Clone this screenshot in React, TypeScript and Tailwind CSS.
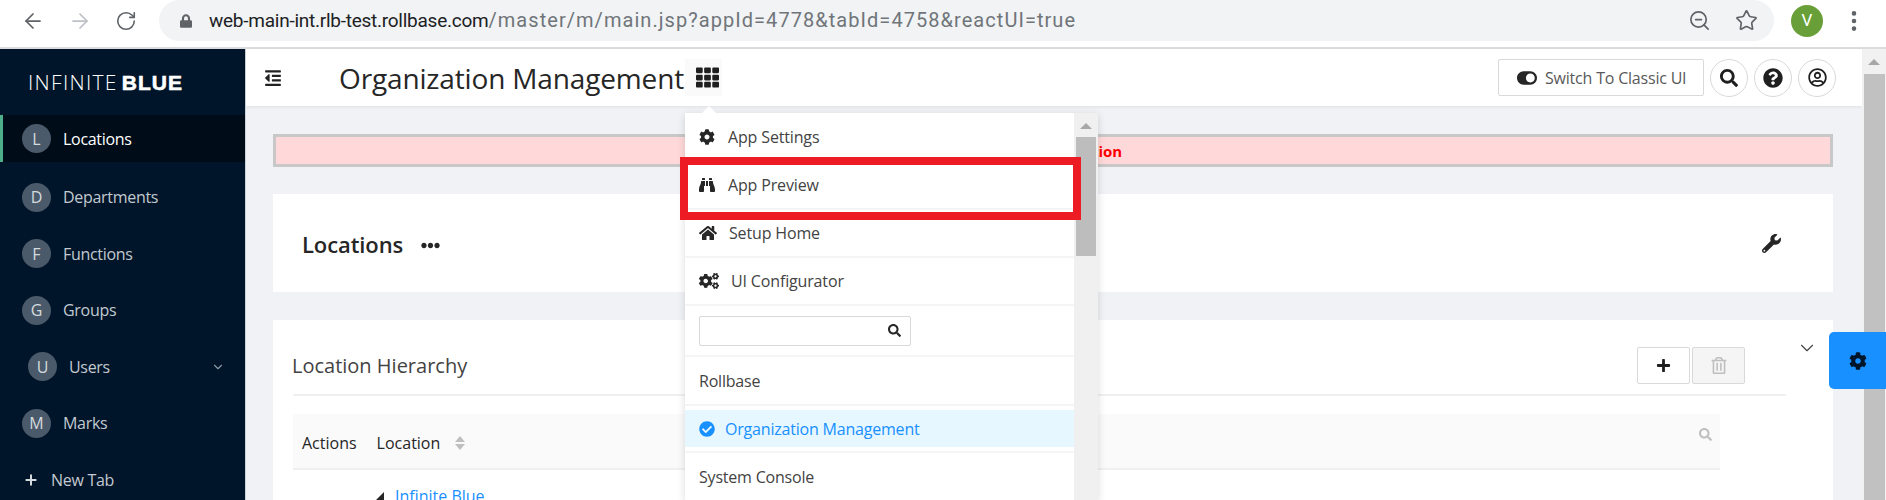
import React from 'react';
import { ArrowLeft, ArrowRight, RotateCw, ZoomOut, Star, EllipsisVertical, ChevronDown, Plus } from 'lucide-react';
import {
  FaBinoculars,
  FaCheckCircle,
  FaCog,
  FaCogs,
  FaEllipsisH,
  FaHome,
  FaLock,
  FaOutdent,
  FaPlus,
  FaQuestionCircle,
  FaRegTrashAlt,
  FaRegUserCircle,
  FaSearch,
  FaTh,
  FaToggleOn,
  FaWrench,
} from 'react-icons/fa';

const navItems = [
  { letter: 'L', label: 'Locations', active: true },
  { letter: 'D', label: 'Departments' },
  { letter: 'F', label: 'Functions' },
  { letter: 'G', label: 'Groups' },
  { letter: 'U', label: 'Users', nested: true },
  { letter: 'M', label: 'Marks' },
];

const BrowserBar: React.FC = () => (
  <div className="h-[49px] shrink-0 flex items-start bg-white border-b-2 border-[#dadce0]">
    <div className="w-[159px] h-[41px] shrink-0 relative flex items-center">
      <ArrowLeft className="ml-[21px] w-[24px] h-[24px] text-[#5f6368]" strokeWidth={1.75} />
      <ArrowRight className="ml-[23px] w-[24px] h-[24px] text-[#bdc1c6]" strokeWidth={1.75} />
      <RotateCw className="ml-[23px] w-[22px] h-[22px] text-[#5f6368]" strokeWidth={1.75} />
    </div>
    <div className="w-[1615px] h-[41px] bg-[#f1f3f4] rounded-r-[21px] rounded-l-[21px] flex items-center pl-[21px] pr-[16px]">
      <FaLock className="w-[12px] h-[14px] text-[#5f6368]" />
      <div className="ml-[17px] text-[19px] font-['Roboto',sans-serif] flex-1">
        <span className="text-[#202124] tracking-[-0.25px]">web-main-int.rlb-test.rollbase.com</span>
        <span className="text-[#70757a] text-[20px] tracking-[1.05px]">/master/m/main.jsp?appId=4778&amp;tabId=4758&amp;reactUI=true</span>
      </div>
      <ZoomOut className="w-[23px] h-[23px] text-[#5f6368]" strokeWidth={1.75} />
      <Star className="ml-[24px] w-[23px] h-[23px] text-[#5f6368]" strokeWidth={1.75} />
    </div>
    <div className="ml-[17px] mt-[5px] w-[32px] h-[32px] rounded-full bg-[#689f38] text-white text-[17px] flex items-center justify-center font-['Roboto',sans-serif]">
      V
    </div>
    <EllipsisVertical className="ml-[18px] mt-[8px] w-[26px] h-[26px] text-[#5f6368]" strokeWidth={2.25} />
  </div>
);

const Sidebar: React.FC = () => (
  <aside className="w-[246px] shrink-0 bg-[#001529] text-[#c3c9d0] border-r border-[#cfd3d8]">
    <div className="h-[66px] pl-[28px] flex items-center text-[21px] leading-none text-white">
      <span className="font-light tracking-[1.3px]">INFINITE</span>
      <span className="ml-[4px] font-black tracking-[1px] font-['Liberation_Sans',sans-serif] [-webkit-text-stroke:0.6px_white]">BLUE</span>
    </div>
    {navItems.map((item) => (
      <div
        key={item.letter}
        className={
          item.active
            ? 'h-[47px] mb-[7px] flex items-center text-[16px] text-white bg-[#000c17] border-l-[3px] border-[#4caf8a] pl-[19px]'
            : item.nested
              ? 'h-[56.5px] flex items-center text-[16px] pl-[28px]'
              : 'h-[56.5px] flex items-center text-[16px] pl-[22px]'
        }
      >
        <span className="w-[29px] h-[29px] rounded-full bg-[#4a5a6a] text-[#d5dade] flex items-center justify-center text-[16px] shrink-0">
          {item.letter}
        </span>
        <span className="ml-[12px] tracking-[-0.3px]">{item.label}</span>
        {item.nested && <ChevronDown className="ml-[101px] w-[14px] h-[14px] text-[#8c97a3]" />}
      </div>
    ))}
    <div className="h-[56px] pl-[23px] flex items-center text-[16px]">
      <Plus className="w-[16px] h-[16px] text-[#d5dade]" strokeWidth={3} />
      <span className="ml-[12px] tracking-[-0.3px]">New Tab</span>
    </div>
  </aside>
);

const Header: React.FC = () => (
  <div className="h-[57px] shrink-0 bg-white flex items-center shadow-[0_1px_3px_rgba(0,0,0,0.08)]">
    <FaOutdent className="ml-[18px] w-[18px] h-[18px] text-[#222]" />
    <h1 className="ml-[57px] text-[28px] leading-none text-[#262626] tracking-[-0.15px]">Organization Management</h1>
    <div className="ml-[1px] w-[37px] h-[37px] bg-[#fafafa] flex items-center justify-end pr-[3px]">
      <FaTh className="w-[23px] h-[23px] text-[#1f1f1f]" />
    </div>
    <button className="ml-auto w-[206px] h-[37px] bg-white border border-[#d9d9d9] rounded-[2px] flex items-center pl-[18px] text-[16px] text-[#595959]">
      <FaToggleOn className="w-[20px] h-[20px] text-[#262626]" />
      <span className="ml-[8px] tracking-[-0.2px]">Switch To Classic UI</span>
    </button>
    <button className="ml-[6px] w-[38px] h-[38px] rounded-full border border-[#d9d9d9] flex items-center justify-center">
      <FaSearch className="w-[18px] h-[18px] text-[#1f1f1f]" />
    </button>
    <button className="ml-[6px] w-[38px] h-[38px] rounded-full border border-[#d9d9d9] flex items-center justify-center">
      <FaQuestionCircle className="w-[20px] h-[20px] text-[#1f1f1f]" />
    </button>
    <button className="ml-[6px] mr-[26px] w-[38px] h-[38px] rounded-full border border-[#d9d9d9] flex items-center justify-center">
      <FaRegUserCircle className="w-[19px] h-[19px] text-[#1f1f1f]" />
    </button>
  </div>
);

const Content: React.FC = () => (
  <div className="flex-1 min-h-0 overflow-hidden pl-[27px] pr-[29px] pt-[28px]">
    <div className="h-[33px] pt-[1px] pr-[2px] bg-[#ffd9d9] border-[3px] border-[#c8c8c8] flex items-center justify-center text-[15px] font-bold text-[#ff0000]">
      Invalid Application
    </div>
    <div className="mt-[27px] h-[98px] bg-white flex items-center pl-[29px] pr-[52px]">
      <span className="pt-[3px] text-[22px] font-semibold text-[#262626] tracking-[-0.1px]">Locations</span>
      <FaEllipsisH className="ml-[18px] mt-[4px] w-[19px] h-[19px] text-[#262626]" />
      <FaWrench className="ml-auto w-[19px] h-[19px] text-[#262626]" />
    </div>
    <div className="mt-[28px] bg-white pl-[20px] h-[200px]">
      <div className="w-[1493px] h-[76px] border-b-2 border-[#f0f0f0] flex items-center pt-[16px] relative">
        <span className="pt-[2px] ml-[-1px] text-[20px] text-[#434343]">Location Hierarchy</span>
        <button className="ml-auto w-[53px] h-[37px] border border-[#d9d9d9] rounded-[2px] bg-white flex items-center justify-center">
          <FaPlus className="w-[15px] h-[15px] text-[#1f1f1f]" />
        </button>
        <button className="ml-[2px] mr-[41px] w-[53px] h-[37px] border border-[#d9d9d9] rounded-[2px] bg-[#f5f5f5] flex items-center justify-center">
          <FaRegTrashAlt className="w-[16px] h-[17px] text-[#bfbfbf]" />
        </button>
        <ChevronDown className="absolute right-[-32px] top-[17px] w-[22px] h-[22px] text-[#434343]" strokeWidth={1.25} />
      </div>
      <div className="mt-[18px] w-[1427px] h-[56px] bg-[#fafafa] border-b-2 border-[#f0f0f0] flex items-center pl-[9px] pr-[8px] text-[16px] text-[#262626]">
        <span className="pt-[4px]">Actions</span>
        <span className="pt-[4px] ml-[20px]">Location</span>
        <span className="mt-[4px] ml-[15px] flex flex-col gap-[2px]">
          <span className="block w-0 h-0 border-x-[5px] border-x-transparent border-b-[6px] border-b-[#bfbfbf]"></span>
          <span className="block w-0 h-0 border-x-[5px] border-x-transparent border-t-[6px] border-t-[#bfbfbf]"></span>
        </span>
        <FaSearch className="ml-auto mb-[14px] w-[13px] h-[13px] text-[#bfbfbf]" />
      </div>
      <div className="mt-[14px] pl-[83px] flex items-center text-[16px] text-[#1890ff]">
        <span className="w-0 h-0 border-l-[8px] border-l-transparent border-b-[8px] border-b-[#262626]"></span>
        <span className="ml-[11px]">Infinite Blue</span>
      </div>
    </div>
  </div>
);

const MenuRow: React.FC<{ icon: React.ReactNode; label: string; gap: string }> = ({ icon, label, gap }) => (
  <div className="h-[48px] border-b-2 border-[#f5f5f5] flex items-center pl-[14px] text-[16px] text-[#434343]">
    {icon}
    <span className={`${gap} tracking-[-0.15px]`}>{label}</span>
  </div>
);

const AppMenu: React.FC = () => (
  <div className="absolute left-[685px] top-[113px] w-[413px] h-[387px] flex bg-white shadow-[0_2px_8px_rgba(0,0,0,0.15)]">
    <span className="absolute left-[17px] top-[-7px] w-0 h-0 border-x-[7px] border-x-transparent border-b-[7px] border-b-white"></span>
    <div className="w-[389px] overflow-hidden pt-[1px]">
      <MenuRow icon={<FaCog className="w-[16px] h-[16px] text-[#262626]" />} label="App Settings" gap="ml-[13px]" />
      <MenuRow icon={<FaBinoculars className="w-[16px] h-[16px] text-[#262626]" />} label="App Preview" gap="ml-[13px]" />
      <MenuRow icon={<FaHome className="w-[18px] h-[18px] text-[#262626]" />} label="Setup Home" gap="ml-[12px]" />
      <MenuRow icon={<FaCogs className="w-[20px] h-[20px] text-[#262626]" />} label="UI Configurator" gap="ml-[12px]" />
      <div className="h-[51px] border-b-2 border-[#f5f5f5] flex items-center pl-[14px]">
        <div className="w-[212px] h-[30px] border border-[#d9d9d9] rounded-[2px] flex items-center justify-end pr-[9px]">
          <FaSearch className="w-[13px] h-[13px] text-[#262626]" />
        </div>
      </div>
      <div className="h-[49px] border-b-2 border-[#f5f5f5] flex items-center pl-[14px] text-[16px] text-[#434343] tracking-[-0.2px]">
        Rollbase
      </div>
      <div className="h-[47px] pt-[4px] border-b-2 border-[#f5f5f5]">
        <div className="h-[37px] bg-[#e6f7ff] flex items-center pl-[14px] text-[16px] text-[#1890ff]">
          <FaCheckCircle className="w-[16px] h-[16px]" />
          <span className="ml-[10px] tracking-[-0.2px]">Organization Management</span>
        </div>
      </div>
      <div className="h-[48px] flex items-center pl-[14px] text-[16px] text-[#434343] tracking-[-0.2px]">
        System Console
      </div>
    </div>
    <div className="w-[24px] bg-[#f0f0f0] flex flex-col items-center">
      <span className="mt-[10px] w-0 h-0 border-x-[6px] border-x-transparent border-b-[6px] border-b-[#a8a8a8]"></span>
      <div className="mt-[8px] w-[20px] h-[119px] bg-[#bdbdbd]"></div>
    </div>
    {/* annotation box drawn on the screenshot */}
    <div className="absolute left-[-5px] top-[44px] w-[401px] h-[63px] border-[8px] border-[#ed1c24]"></div>
  </div>
);

const App: React.FC = () => {
  return (
    <div className="relative w-[1886px] h-[500px] overflow-hidden flex flex-col bg-[#f0f2f5] font-['Open_Sans','Noto_Sans',sans-serif]">
      <BrowserBar />
      <div className="flex flex-1 min-h-0">
        <Sidebar />
        <main className="flex-1 min-w-0 flex flex-col">
          <Header />
          <Content />
        </main>
        <div className="w-[24px] shrink-0 bg-[#f1f1f1] flex flex-col items-center">
          <span className="mt-[10px] w-0 h-0 border-x-[6px] border-x-transparent border-b-[6px] border-b-[#a8a8a8]"></span>
          <div className="mt-[9px] w-[21px] flex-1 bg-[#c1c1c1]"></div>
        </div>
      </div>
      <AppMenu />
      <div className="absolute left-[1829px] top-[332px] w-[57px] h-[57px] bg-[#1890ff] rounded-l-[5px] flex items-center justify-center">
        <FaCog className="w-[18px] h-[18px] text-[#001529]" />
      </div>
    </div>
  );
};

export default App;
